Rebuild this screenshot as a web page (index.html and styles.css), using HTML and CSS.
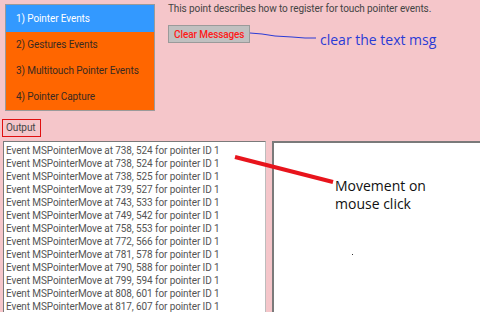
FILE: index.html
```html
<!DOCTYPE html>
<html>
<head>
<meta charset="utf-8">
<link rel="stylesheet" href="styles.css">
</head>
<body>
<div class="page">
  <div class="top">
    <ul class="nav">
      <li class="item active">1) Pointer Events</li>
      <li class="item">2) Gestures Events</li>
      <li class="item">3) Multitouch Pointer Events</li>
      <li class="item">4) Pointer Capture</li>
    </ul>
    <div class="desc">
      <p class="intro">This point describes how to register for touch pointer events.</p>
      <button class="btn">Clear Messages</button>
    </div>
  </div>
  <div class="label-row"><span class="output-label">Output</span></div>
  <div class="panes">
    <div class="log">
      <div class="line">Event MSPointerMove at 738, 524 for pointer ID 1</div>
      <div class="line">Event MSPointerMove at 738, 524 for pointer ID 1</div>
      <div class="line">Event MSPointerMove at 738, 525 for pointer ID 1</div>
      <div class="line">Event MSPointerMove at 739, 527 for pointer ID 1</div>
      <div class="line">Event MSPointerMove at 743, 533 for pointer ID 1</div>
      <div class="line">Event MSPointerMove at 749, 542 for pointer ID 1</div>
      <div class="line">Event MSPointerMove at 758, 553 for pointer ID 1</div>
      <div class="line">Event MSPointerMove at 772, 566 for pointer ID 1</div>
      <div class="line">Event MSPointerMove at 781, 578 for pointer ID 1</div>
      <div class="line">Event MSPointerMove at 790, 588 for pointer ID 1</div>
      <div class="line">Event MSPointerMove at 799, 594 for pointer ID 1</div>
      <div class="line">Event MSPointerMove at 808, 601 for pointer ID 1</div>
      <div class="line">Event MSPointerMove at 817, 607 for pointer ID 1</div>
    </div>
    <div class="canvas"><span class="dot"></span></div>
  </div>
  <svg class="overlay" width="480" height="312" viewBox="0 0 480 312">
    <polyline points="250,33 262,34 275,36 292,37 305,38 316,38" fill="none" stroke="#2a3bd6" stroke-width="1"/>
    <line x1="235" y1="157" x2="333" y2="182" stroke="#e8141c" stroke-width="4"/>
  </svg>
  <span class="note note-clear">clear the text msg</span>
  <span class="note note-move">Movement on<br>mouse click</span>
</div>
</body>
</html>
```
FILE: styles.css
```css
html, body {
  margin: 0;
  padding: 0;
}
body {
  background: #f5c6ca;
  font-family: Roboto, "Open Sans", sans-serif;
  font-size: 10px;
  letter-spacing: -0.1px;
  color: #444;
  width: 480px;
  height: 312px;
  overflow: hidden;
}
.page {
  position: relative;
  width: 480px;
  height: 312px;
}
.top {
  display: flex;
  padding: 4px 0 0 5px;
  gap: 13px;
}
.nav {
  list-style: none;
  margin: 0;
  padding: 0;
  width: 148px;
  border: 1px solid #9a9a9a;
  background: #ff6600;
}
.item {
  height: 26px;
  line-height: 26px;
  padding-left: 10px;
  color: #3a2a20;
  white-space: nowrap;
}
.item.active {
  background: #3399ff;
  color: #fff;
  height: 27px;
  line-height: 27px;
}
.desc {
  display: flex;
  flex-direction: column;
  align-items: flex-start;
}
.intro {
  margin: 0;
  line-height: 10px;
  color: #444;
  white-space: nowrap;
}
.btn {
  margin-top: 11px;
  height: 18px;
  padding: 0 5px;
  background: #c0c0c0;
  border: 1px solid #9a9a9a;
  color: #ff1a1a;
  font-family: inherit;
  font-size: 10px;
  letter-spacing: inherit;
  font-weight: 500;
}
.label-row {
  padding: 8px 0 0 2px;
  height: 18px;
}
.output-label {
  display: inline-block;
  border: 1px solid #e01010;
  padding: 0 5px 0 3px;
  height: 16px;
  line-height: 16px;
  color: #444;
}
.panes {
  display: flex;
  gap: 6px;
  padding: 4px 0 0 3px;
}
.log {
  width: 263px;
  height: 180px;
  background: #fff;
  border: 1px solid #7a7a7a;
  border-right-color: #bdbdbd;
  padding: 2px 0 0 2px;
  box-sizing: border-box;
  overflow: hidden;
}
.line {
  height: 13px;
  line-height: 13px;
  white-space: nowrap;
  color: #555;
}
.canvas {
  position: relative;
  flex: 1;
  height: 180px;
  background: #fff;
  border: 2px solid #7a7a7a;
  border-right: none;
  border-bottom: none;
  box-sizing: border-box;
}
.dot {
  position: absolute;
  left: 78px;
  top: 111px;
  width: 1px;
  height: 1px;
  background: #333;
}
.overlay {
  position: absolute;
  left: 0;
  top: 0;
}
.note {
  position: absolute;
  font-family: "Open Sans", "Noto Sans", sans-serif;
  font-size: 14px;
  letter-spacing: 0;
  line-height: 18px;
}
.note-clear {
  left: 320px;
  top: 31px;
  color: #2a3bd6;
}
.note-move {
  left: 335px;
  top: 177px;
  color: #111;
}
```
